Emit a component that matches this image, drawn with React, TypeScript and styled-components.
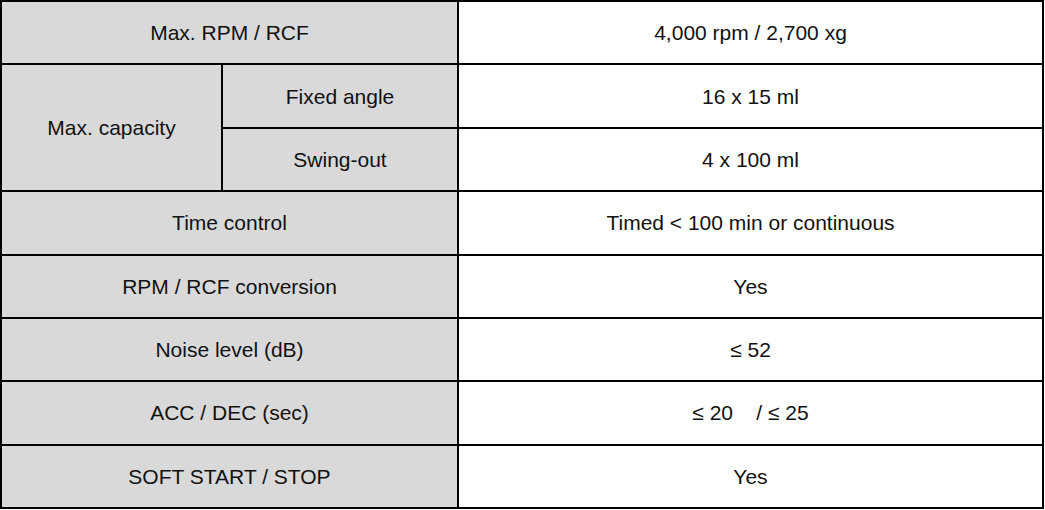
import React from "react";
import styled, { createGlobalStyle } from "styled-components";

const Global = createGlobalStyle`
  html, body {
    margin: 0;
    padding: 0;
    background: #ffffff;
  }
  body {
    font-family: "Liberation Sans", Arial, sans-serif;
  }
`;

const Table = styled.div`
  display: grid;
  grid-template-columns: 219px 234px 1fr;
  grid-template-rows: repeat(8, 1fr);
  gap: 2px;
  padding: 2px;
  background: #000000;
  width: 1044px;
  height: 509px;
  box-sizing: border-box;
`;

const Cell = styled.div<{ $shade?: boolean; $col: string; $row?: string }>`
  grid-column: ${({ $col }) => $col};
  grid-row: ${({ $row }) => $row ?? "auto"};
  background: ${({ $shade }) => ($shade ? "#d9d9d9" : "#ffffff")};
  display: flex;
  align-items: center;
  justify-content: center;
  padding-top: 1px;
  font-size: 21px;
  color: #111111;
  white-space: pre;
`;

const rows: [string, string][] = [
  ["Time control", "Timed < 100 min or continuous"],
  ["RPM / RCF conversion", "Yes"],
  ["Noise level (dB)", "≤ 52"],
  ["ACC / DEC (sec)", "≤ 20    / ≤ 25"],
  ["SOFT START / STOP", "Yes"],
];

export default function App() {
  return (
    <>
      <Global />
      <Table>
        <Cell $shade $col="1 / 3" $row="1">Max. RPM / RCF</Cell>
        <Cell $col="3" $row="1">4,000 rpm / 2,700 xg</Cell>

        <Cell $shade $col="1" $row="2 / 4">Max. capacity</Cell>
        <Cell $shade $col="2" $row="2">Fixed angle</Cell>
        <Cell $col="3" $row="2">16 x 15 ml</Cell>
        <Cell $shade $col="2" $row="3">Swing-out</Cell>
        <Cell $col="3" $row="3">4 x 100 ml</Cell>

        {rows.map(([label, value], i) => (
          <React.Fragment key={label}>
            <Cell $shade $col="1 / 3" $row={String(i + 4)}>{label}</Cell>
            <Cell $col="3" $row={String(i + 4)}>{value}</Cell>
          </React.Fragment>
        ))}
      </Table>
    </>
  );
}
